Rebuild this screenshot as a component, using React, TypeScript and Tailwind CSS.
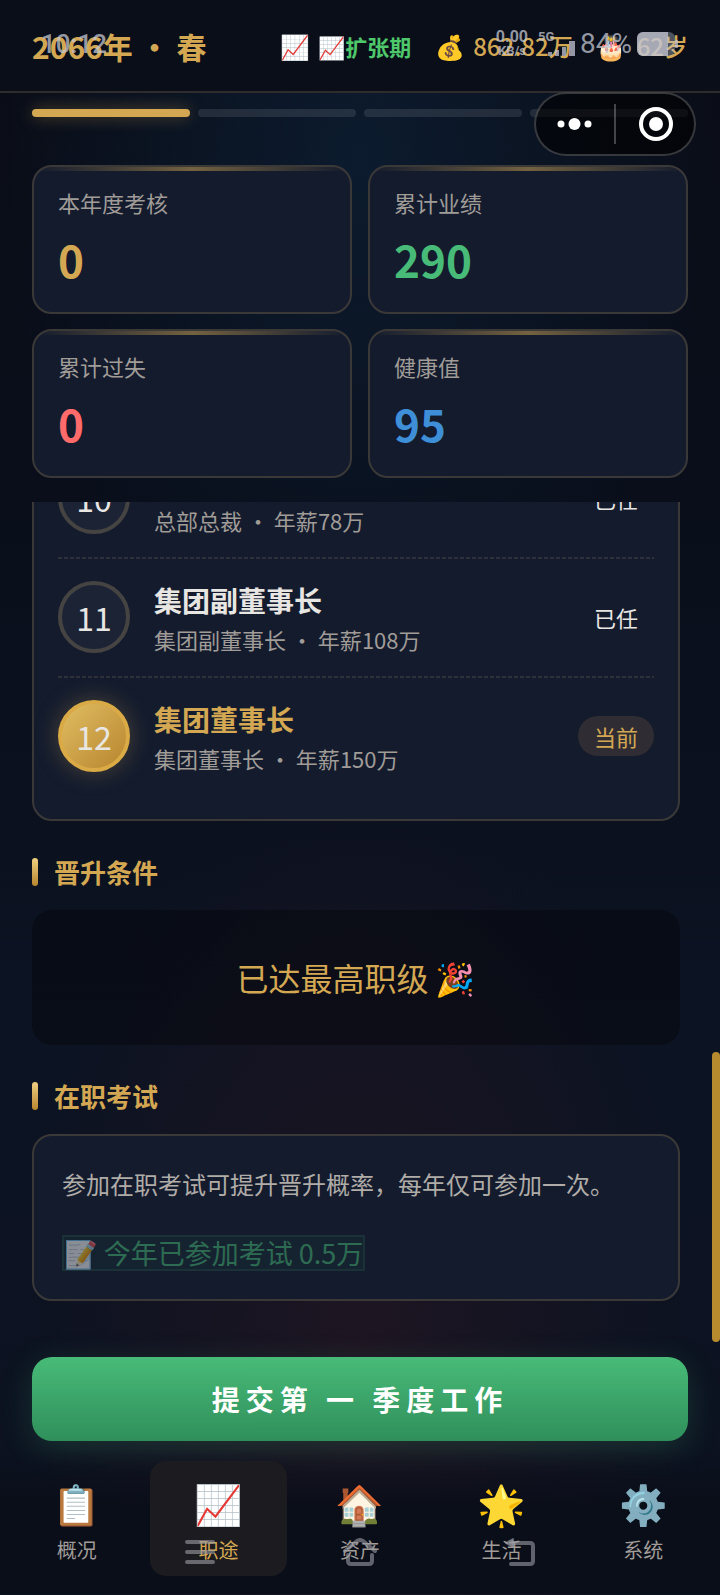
import clsx from "clsx";

const STATS = [
  { label: "本年度考核", value: "0", color: "text-[#d4a853]" },
  { label: "累计业绩", value: "290", color: "text-[#48bb78]" },
  { label: "累计过失", value: "0", color: "text-[#ff6b6b]" },
  { label: "健康值", value: "95", color: "text-[#3f8fd8]" },
];

const RANKS = [
  { level: 10, title: "总部总裁", dept: "总部总裁", salary: "78万", current: false },
  { level: 11, title: "集团副董事长", dept: "集团副董事长", salary: "108万", current: false },
  { level: 12, title: "集团董事长", dept: "集团董事长", salary: "150万", current: true },
];

const TABS = [
  { icon: "📋", label: "概况" },
  { icon: "📈", label: "职途" },
  { icon: "🏠", label: "资产" },
  { icon: "🌟", label: "生活" },
  { icon: "⚙️", label: "系统" },
];

const ACTIVE_TAB = "职途";

// Phone status bar, drawn over the game header
function StatusBar() {
  return (
    <div className="pointer-events-none absolute inset-x-0 top-7 flex h-8 items-center justify-between pr-[42px] pl-[41px] font-['Roboto','Noto_Sans_CJK_SC',sans-serif] text-[#c3c6d2]/75">
      <span className="text-[26px] leading-8 font-medium">10:12</span>
      <div className="flex items-center">
        <div className="flex flex-col items-center leading-[14px] font-bold">
          <span className="text-[16px]">0.00</span>
          <span className="text-[13px]">KB/s</span>
        </div>
        <svg width="40" height="30" viewBox="0 0 40 30" className="ml-2" fill="currentColor">
          <text x="2" y="12" fontSize="13" fontWeight="700">5G</text>
          <rect x="12" y="23" width="4" height="4" />
          <rect x="19" y="21" width="4" height="6" />
          <rect x="26" y="18" width="4" height="9" />
          <rect x="33" y="12" width="6" height="15" />
        </svg>
        <span className="ml-1 text-[28px] leading-8">84%</span>
        <svg width="42" height="26" viewBox="0 0 42 26" className="ml-1" fill="currentColor">
          <rect x="1" y="1" width="38" height="24" rx="6" opacity="0.5" />
          <path d="M7 1h25v24H7a6 6 0 0 1-6-6V7a6 6 0 0 1 6-6z" />
          <rect x="39" y="9" width="3" height="8" rx="1" />
        </svg>
      </div>
    </div>
  );
}

// Mini program menu / close capsule
function Capsule() {
  return (
    <div className="absolute top-[92px] right-6 z-10 flex h-16 w-[162px] items-center rounded-full border-2 border-white/20 bg-black/60">
      <button type="button" aria-label="更多" className="flex h-full flex-1 items-center justify-center">
        <svg width="36" height="16" viewBox="0 0 36 16" fill="#fff">
          <circle cx="4" cy="8" r="3.5" />
          <circle cx="17.500" cy="8" r="6" />
          <circle cx="31" cy="8" r="3.5" />
        </svg>
      </button>
      <span className="h-10 w-[2px] bg-white/25" />
      <button type="button" aria-label="关闭" className="flex h-full flex-1 items-center justify-center">
        <svg width="36" height="36" viewBox="0 0 36 36">
          <circle cx="19" cy="18" r="15" fill="none" stroke="#fff" strokeWidth="4" />
          <circle cx="19" cy="18" r="7" fill="#fff" />
        </svg>
      </button>
    </div>
  );
}

function SectionTitle({ children }: { children: string }) {
  return (
    <h2 className="mt-[33px] mb-5 flex items-center gap-4 text-[26px] leading-9 font-bold text-[#d4a853]">
      <span className="h-7 w-[6px] rounded-[3px] bg-linear-to-b from-[#f0d080] to-[#b8862d]" />
      {children}
    </h2>
  );
}

function SystemKeys() {
  return (
    <div className="pointer-events-none absolute inset-x-0 bottom-7 flex justify-center gap-[126px] text-[#9b9ca3]/60">
      <svg width="32" height="28" viewBox="0 0 32 28" fill="none" stroke="currentColor" strokeWidth="4" strokeLinecap="round">
        <path d="M3 4h26M3 14h26M3 24h26" />
      </svg>
      <svg width="36" height="28" viewBox="0 0 36 28" fill="none" stroke="currentColor" strokeWidth="4" strokeLinecap="round" strokeLinejoin="round">
        <path d="M3 13L15 3q3-2 6 0l12 10M6 17v6q0 3 3 3h18q3 0 3-3v-6" />
      </svg>
      <svg width="32" height="28" viewBox="0 0 32 28" fill="none" stroke="currentColor" strokeWidth="4" strokeLinecap="round" strokeLinejoin="round">
        <path d="M7 26h19q3 0 3-3V8q0-3-3-3H8" />
        <path d="M9 1L2 5l7 4z" fill="currentColor" strokeWidth="2" />
      </svg>
    </div>
  );
}

export default function App() {
  return (
    <div className="relative flex min-h-screen flex-col overflow-hidden bg-[#0b101c] bg-[radial-gradient(ellipse_50%_32%_at_50%_10%,#0c1b2e_0%,transparent_100%),radial-gradient(ellipse_46%_36%_at_50%_84%,#1e1522_0%,transparent_100%),linear-gradient(to_bottom,#0a0d17_0%,#090e1a_30%,#0c1322_65%,#0c1220_100%)] font-['Noto_Sans_CJK_SC','Noto_Color_Emoji',sans-serif] text-[#e8e6e3]">
      <header className="relative flex h-[93px] items-center justify-between border-b-2 border-[#2e2c2c] bg-[#0a0e19] px-8">
        <h1 className="text-[30px] leading-9 font-bold text-[#d4a853]">2066年 • 春</h1>
        <div className="flex items-center gap-6 text-[24px] leading-9 font-medium text-[#d4a853]">
          <span className="flex items-center gap-2">
            📈<span className="text-[22px] font-bold text-[#4fc86c]">📈扩张期</span>
          </span>
          <span className="flex gap-2">
            <span>💰</span>862.82万
          </span>
          <span className="flex gap-[10px]">
            <span>🎂</span>62岁
          </span>
        </div>
        <StatusBar />
      </header>
      <Capsule />

      <div className="flex gap-2 px-8 pt-4">
        <span className="h-2 flex-1 rounded-full bg-[#d4a853] shadow-[0_0_16px_rgba(212,168,83,0.4)]" />
        <span className="h-2 flex-1 rounded-full bg-white/10" />
        <span className="h-2 flex-1 rounded-full bg-white/10" />
        <span className="h-2 flex-1 rounded-full bg-white/10" />
      </div>

      <section className="mt-12 grid grid-cols-2 gap-x-4 gap-y-[15px] px-8">
        {STATS.map((s) => (
          <div key={s.label} className="relative overflow-hidden rounded-[20px] border-2 border-[#3b3938] bg-[#131b2d] px-6 pt-[19px] pb-[21px]">
            <span className="absolute inset-x-0 top-0 h-1 bg-linear-to-r from-transparent via-[#d4a853]/50 to-transparent" />
            <div className="text-[22px] leading-8 text-[#a09c98]">{s.label}</div>
            <div className={clsx("mt-[9px] text-[44px] leading-[64px] font-bold", s.color)}>{s.value}</div>
          </div>
        ))}
      </section>

      <main className="relative mt-6 overflow-hidden pr-10 pb-10 pl-8">
        <ul className="-mt-16 rounded-[20px] border-2 border-[#3b3938] bg-[#131b2d] px-6 pb-6">
          {RANKS.map((r) => (
            <li
              key={r.level}
              className="flex items-center bg-[repeating-linear-gradient(to_right,#2e303a_0_4px,transparent_4px_6px)] bg-[length:100%_2px] bg-bottom bg-no-repeat pt-[21px] pb-[25px] last:bg-none last:pb-[23px]"
            >
              <span
                className={clsx(
                  "flex size-[72px] shrink-0 items-center justify-center rounded-full border-4 text-[32px]",
                  r.current
                    ? "border-[#d9aa45] bg-linear-to-br from-[#e0bd62] to-[#b8862d] shadow-[0_0_24px_rgba(212,168,83,0.3)]"
                    : "border-[#464442] bg-[#1b2335]"
                )}
              >
                {r.level}
              </span>
              <div className="ml-6 flex-1">
                <div className={clsx("text-[28px] leading-[41px] font-bold", r.current && "text-[#d4a853]")}>{r.title}</div>
                <div className="mt-1 text-[22px] leading-7 text-[#a09c98]">
                  {r.dept} • 年薪{r.salary}
                </div>
              </div>
              <span className={clsx("rounded-full px-4 py-1 text-[22px] leading-8", r.current && "bg-[#2f2d33] text-[#d4a853]")}>
                {r.current ? "当前" : "已任"}
              </span>
            </li>
          ))}
        </ul>

        <SectionTitle>晋升条件</SectionTitle>
        <div className="rounded-[20px] bg-black/30 px-6 py-11 text-center text-[32px] leading-[47px] text-[#d4a853]">
          已达最高职级 🎉
        </div>

        <SectionTitle>在职考试</SectionTitle>
        <div className="rounded-[20px] border-2 border-[#3b3938] bg-[#131b2d] p-7">
          <p className="text-[24px] leading-10 text-[#b0aca8]">参加在职考试可提升晋升概率，每年仅可参加一次。</p>
          <button type="button" disabled className="mt-[31px] block border-2 border-[#48bb78]/20 bg-[#48bb78]/10 text-[27px] leading-8 whitespace-nowrap text-[#48bb78] opacity-50">
            📝 今年已参加考试 0.5万
          </button>
        </div>
      </main>
      <span className="absolute top-[1052px] right-0 h-[290px] w-2 rounded-full bg-[#b98b2f]" />

      <div className="px-8 pt-4">
        <button type="button" className="h-[84px] w-full rounded-[20px] bg-linear-to-b from-[#48bb78] to-[#2f8f5b] text-[28px] font-bold tracking-[6px] text-white shadow-[0_8px_32px_rgba(72,187,120,0.2)]">
          提交第 一 季度工作
        </button>
      </div>

      <nav className="relative mt-2 flex gap-1 bg-linear-to-b from-transparent to-[#0a0e19] to-40% px-2 pt-3 pb-[18px]">
        {TABS.map((t) => (
          <a
            key={t.label}
            href="#"
            className={clsx(
              "flex h-[115px] flex-1 flex-col items-center rounded-[16px] pt-3",
              t.label === ACTIVE_TAB ? "bg-[#1c1b1f] text-[#d4a853]" : "text-[#a09c98]"
            )}
          >
            <span className="text-[39px] leading-[58px]">{t.icon}</span>
            <span className="mt-[5px] text-[20px] leading-7">{t.label}</span>
          </a>
        ))}
        <SystemKeys />
      </nav>
    </div>
  );
}
